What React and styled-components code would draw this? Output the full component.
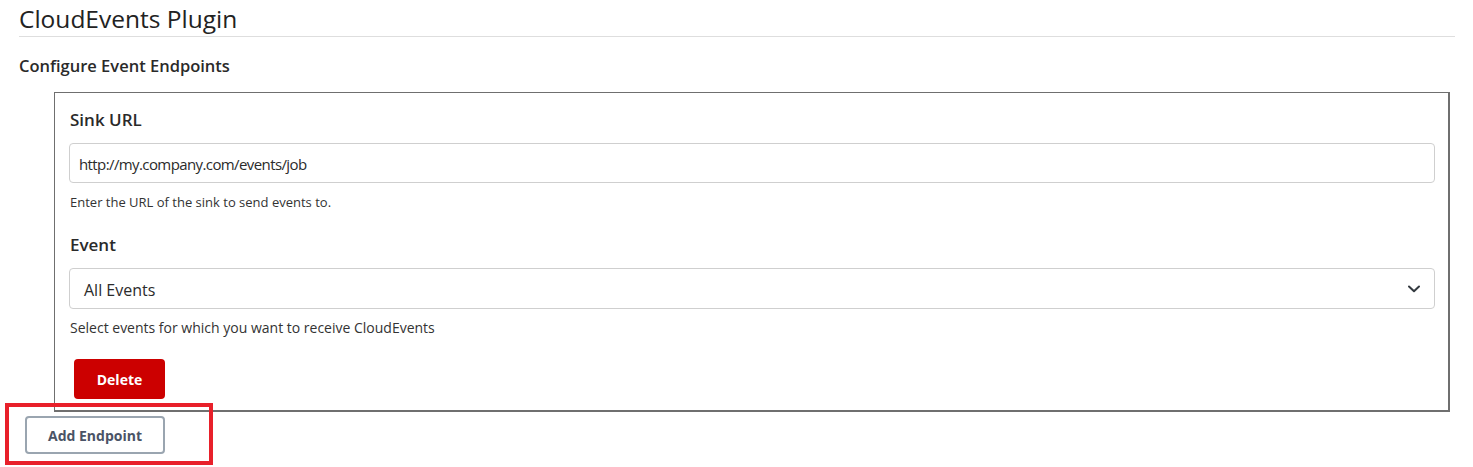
import React from "react";
import styled, { createGlobalStyle } from "styled-components";

const Global = createGlobalStyle`
  html, body { margin: 0; padding: 0; background: #fff; }
  body { font-family: "Open Sans", "Noto Sans", sans-serif; color: #212529; }
  * { box-sizing: border-box; }
`;

const Page = styled.div`
  position: relative;
  min-height: 467px;
  padding: 4px 18px 0 19px;
`;

const Title = styled.h1`
  margin: 0;
  padding-bottom: 2px;
  font-size: 24.5px;
  line-height: 30px;
  font-weight: 400;
  color: #222;
  border-bottom: 1px solid #dedede;
`;

const Subtitle = styled.h2`
  margin: 18px 0 0;
  font-size: 16.5px;
  line-height: 22px;
  font-weight: 600;
  color: #2a2a2a;
`;

const Endpoint = styled.div`
  margin: 15px 5px 0 35px;
  border: 1px solid #6f6f6f;
  border-right-width: 2px;
  border-bottom-width: 2px;
  padding: 15px 13px 11px 15px;
`;

const Label = styled.div`
  font-size: 17px;
  line-height: 24px;
  font-weight: 600;
  color: #2a2a2a;
  margin-top: ${(p) => p.$top || 0}px;
`;

const Field = styled.div`
  position: relative;
  margin: 11px 0 0 -1px;
  height: ${(p) => p.$h || 40}px;
  border: 1px solid #cfcfcf;
  border-radius: 4px;
  display: flex;
  align-items: center;
  padding: 0 14px 0 9px;
  font-size: 16px;
  color: #2b2b2b;
  background: #fff;
`;

const FieldText = styled.span`
  flex: 1;
  padding-left: ${(p) => p.$pl || 0}px;
  padding-top: 2px;
  font-size: ${(p) => p.$fs || 16}px;
  letter-spacing: ${(p) => p.$ls || 0}px;
`;

const Help = styled.div`
  margin-top: ${(p) => p.$top || 9}px;
  font-size: ${(p) => p.$fs || 13.5}px;
  line-height: 20px;
  color: #333;
`;

const DeleteButton = styled.button`
  display: block;
  margin: 21px 0 0 4px;
  width: 91px;
  height: 40px;
  border: none;
  border-radius: 4px;
  background: #cc0000;
  color: #fff;
  font-family: "Open Sans", sans-serif;
  font-size: 14px;
  font-weight: 700;
`;

const AddButton = styled.button`
  display: block;
  margin: 4px 0 0 6px;
  width: 140px;
  height: 38px;
  border: 2px solid #9aa5b0;
  border-radius: 4px;
  background: #fff;
  color: #4a5366;
  font-family: "Open Sans", sans-serif;
  font-size: 14px;
  font-weight: 700;
`;

const Highlight = styled.div`
  position: absolute;
  left: 5px;
  top: 403px;
  width: 208px;
  height: 62px;
  border: 4px solid #e8202a;
  pointer-events: none;
`;

const Chevron = () => (
  <svg width="12" height="8" viewBox="0 0 12 8" fill="none">
    <path d="M1 1.5 L6 6.2 L11 1.5" stroke="#343a40" strokeWidth="2" strokeLinecap="round" strokeLinejoin="round" />
  </svg>
);

export default function App() {
  return (
    <>
      <Global />
      <Page>
        <Title>CloudEvents Plugin</Title>
        <Subtitle>Configure Event Endpoints</Subtitle>
        <Endpoint>
          <Label>Sink URL</Label>
          <Field>
            <FieldText $fs={15} $ls={-0.6}>http://my.company.com/events/job</FieldText>
          </Field>
          <Help $fs={13}>Enter the URL of the sink to send events to.</Help>
          <Label $top={21}>Event</Label>
          <Field $h={41}>
            <FieldText $pl={5}>All Events</FieldText>
            <Chevron />
          </Field>
          <Help $top={9} $fs={14}>Select events for which you want to receive CloudEvents</Help>
          <DeleteButton>Delete</DeleteButton>
        </Endpoint>
        <AddButton>Add Endpoint</AddButton>
        <Highlight />
      </Page>
    </>
  );
}
